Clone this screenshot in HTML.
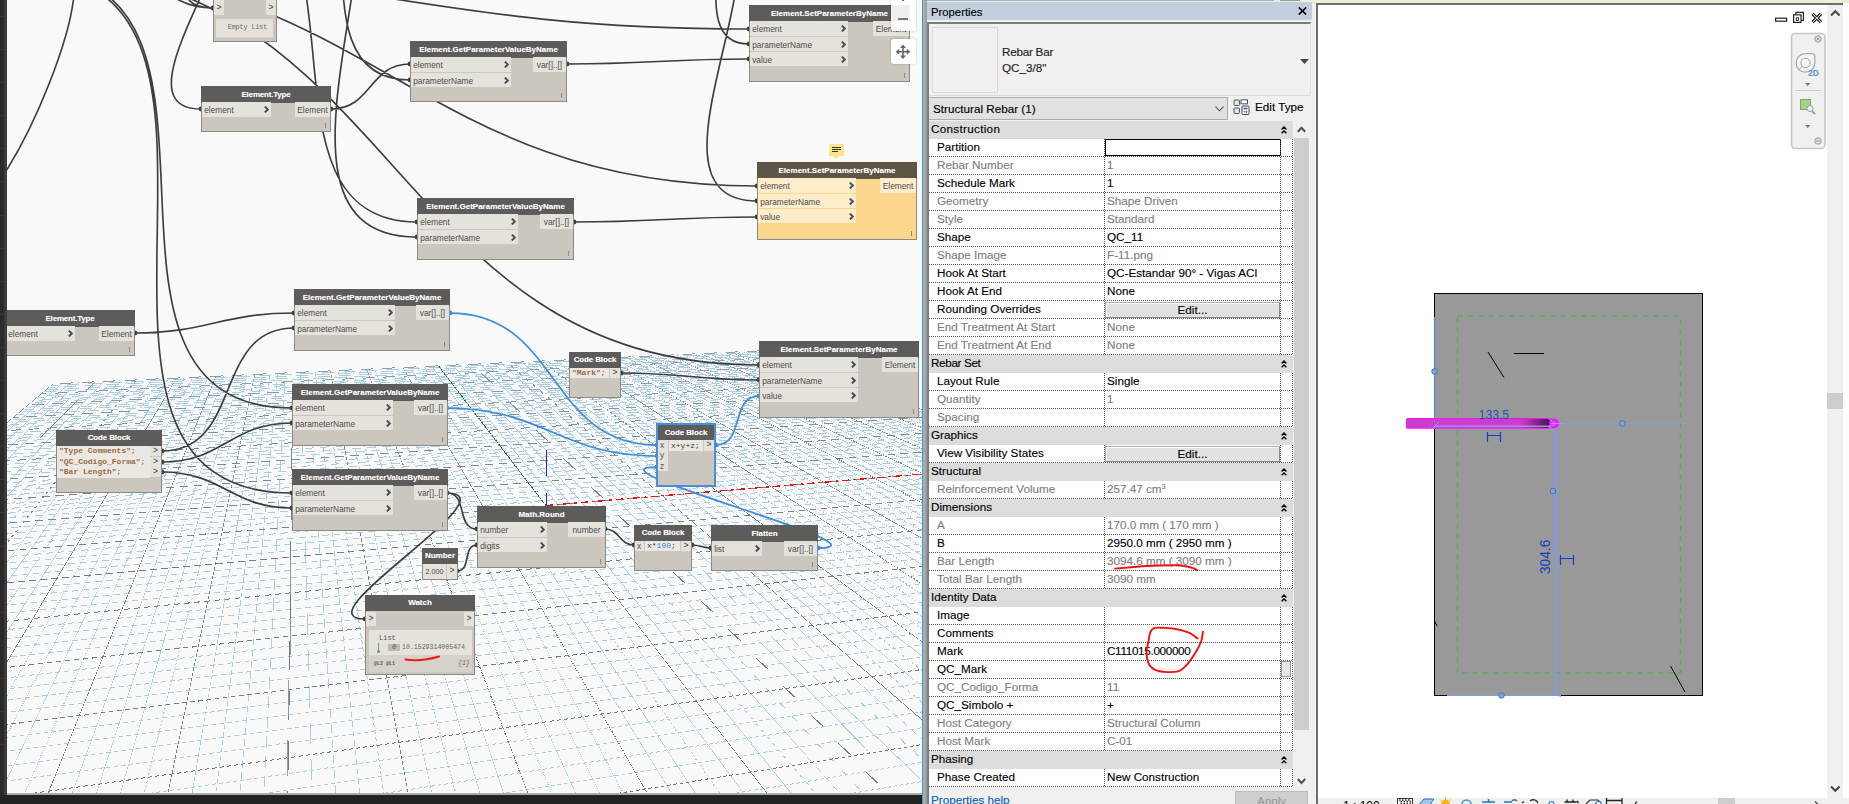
<!DOCTYPE html><html><head><meta charset="utf-8"><title>Dynamo - Revit</title><style>
*{box-sizing:border-box}
html,body{margin:0;padding:0}
body{width:1849px;height:804px;overflow:hidden;position:relative;background:#fff;font-family:"Liberation Sans",sans-serif}
#dyn{position:absolute;left:0;top:0;width:922px;height:804px;background:#222;overflow:hidden}
#strip{position:absolute;left:0;top:0;width:7px;height:795px;background:linear-gradient(90deg,transparent 0 4px,#3b3b3b 4px 7px),repeating-linear-gradient(180deg,#2a2a2a 0 16px,#363636 16px 17px,#2a2a2a 17px 33.1px)}
#cv{position:absolute;left:7px;top:0;width:915px;height:793px;background:#f9f9f9;overflow:hidden}
#cvline{position:absolute;left:7px;top:793px;width:915px;height:2px;background:#ababab}
#cv svg.ov{position:absolute;left:-7px;top:0}
.n{position:absolute;background:#cbc6be;border:1px solid #8d8a85;color:#4c4c4c;font-size:8.3px;line-height:14px;white-space:nowrap}
.n .h{position:absolute;left:-1px;top:-1px;right:-1px;height:16.5px;background:#5e5c5a;color:#fff;font-weight:bold;font-size:8px;line-height:17px;text-align:center;letter-spacing:0;text-shadow:0 0 1px rgba(255,255,255,.35)}
.n .p{position:absolute;height:14.4px;line-height:16.6px;background:#e5e2dc;padding-left:2.2px;overflow:hidden}
.n .o{position:absolute;height:14.4px;line-height:16.6px;background:#e5e2dc;text-align:center;overflow:hidden}
.n .ch{position:absolute;right:2px;top:4px;width:5px;height:7px}
.n .lg{position:absolute;right:4px;bottom:3px;width:1px;height:5px;background:#8d8a85}
.n.sel{border:2px solid #4a90d0}
.n.warn{background:#fbd68c;border-color:#8d8a85}
.n.warn .p,.n.warn .o{background:#feeccb}
.n.warn .h{background:#5d5546}
.mono{font-family:"Liberation Mono",monospace}
.dot{position:absolute;width:4px;height:4px;border-radius:2px;background:#444}
</style></head><body>
<div id="dyn"><div id="strip"></div><div id="cvline"></div><div id="cv">
<svg class="ov" width="922" height="793" viewBox="0 0 922 793" shape-rendering="crispEdges" fill="none"><defs><linearGradient id="gM" gradientUnits="userSpaceOnUse" x1="0" y1="355" x2="0" y2="793"><stop offset="0" stop-color="#93a3ae"/><stop offset=".2" stop-color="#7d8c97"/><stop offset=".5" stop-color="#6f7e88"/><stop offset="1" stop-color="#6b7a84"/></linearGradient></defs><g stroke-width="1"><path d="M61.9 383.4L0.0 437.5" stroke="#a9cde2" stroke-dasharray="0.88 0.64" stroke-dashoffset="0.23"/><path d="M70.3 383.0L0.0 446.6" stroke="#a9cde2" stroke-dasharray="0.86 0.63" stroke-dashoffset="0.97"/><path d="M78.7 382.6L0.0 456.4" stroke="#a9cde2" stroke-dasharray="0.85 0.61" stroke-dashoffset="0.11"/><path d="M87.0 382.2L0.0 466.9" stroke="#a9cde2" stroke-dasharray="0.83 0.60" stroke-dashoffset="0.77"/><path d="M103.6 381.4L0.0 490.6" stroke="#a9cde2" stroke-dasharray="0.84 0.61" stroke-dashoffset="0.08"/><path d="M111.8 381.1L0.0 503.9" stroke="#a9cde2" stroke-dasharray="0.86 0.62" stroke-dashoffset="0.75"/><path d="M120.0 380.7L0.0 518.5" stroke="#a9cde2" stroke-dasharray="0.88 0.64" stroke-dashoffset="0.06"/><path d="M128.2 380.3L0.0 534.4" stroke="#a9cde2" stroke-dasharray="0.91 0.66" stroke-dashoffset="0.68"/><path d="M144.4 379.5L0.0 571.1" stroke="#a9cde2" stroke-dasharray="0.96 0.70" stroke-dashoffset="0.15"/><path d="M152.5 379.2L0.0 592.5" stroke="#a9cde2" stroke-dasharray="1.00 0.72" stroke-dashoffset="0.73"/><path d="M160.5 378.8L0.0 616.4" stroke="#a9cde2" stroke-dasharray="1.04 0.75" stroke-dashoffset="1.48"/><path d="M168.6 378.4L0.0 643.2" stroke="#a9cde2" stroke-dasharray="1.08 0.78" stroke-dashoffset="0.23"/><path d="M184.5 377.7L0.0 708.1" stroke="#a9cde2" stroke-dasharray="1.19 0.86" stroke-dashoffset="1.29"/><path d="M192.4 377.3L0.0 747.8" stroke="#a9cde2" stroke-dasharray="1.26 0.91" stroke-dashoffset="2.06"/><path d="M200.3 376.9L-0.0 794.0" stroke="#a9cde2" stroke-dasharray="1.34 0.97" stroke-dashoffset="1.33"/><path d="M208.2 376.6L21.4 800.0" stroke="#a9cde2" stroke-dasharray="1.44 1.04" stroke-dashoffset="0.98"/><path d="M223.8 375.8L69.8 800.0" stroke="#a9cde2" stroke-dasharray="1.70 1.23" stroke-dashoffset="0.14"/><path d="M231.6 375.5L94.1 800.0" stroke="#a9cde2" stroke-dasharray="1.88 1.36" stroke-dashoffset="2.78"/><path d="M239.4 375.1L118.3 800.0" stroke="#a9cde2" stroke-dasharray="2.12 1.53" stroke-dashoffset="1.06"/><path d="M247.1 374.8L142.5 800.0" stroke="#a9cde2" stroke-dasharray="2.43 1.76" stroke-dashoffset="0.60"/><path d="M262.5 374.0L191.0 800.0" stroke="#a9cde2" stroke-dasharray="3.50 2.54" stroke-dashoffset="1.86"/><path d="M270.1 373.7L215.2 800.0" stroke="#a9cde2" stroke-dasharray="4.54 3.29" stroke-dashoffset="6.39"/><path d="M277.7 373.3L239.4 800.0" stroke="#a9cde2" stroke-dasharray="6.49 4.70" stroke-dashoffset="2.02"/><path d="M285.3 373.0L263.7 800.0" stroke="#a9cde2" stroke-dasharray="11.46 8.30" stroke-dashoffset="11.50"/><path d="M300.4 372.3L312.1 800.0" stroke="#a9cde2" stroke-dasharray="21.13 15.30" stroke-dashoffset="13.57"/><path d="M307.9 371.9L336.4 800.0" stroke="#a9cde2" stroke-dasharray="8.74 6.33" stroke-dashoffset="8.25"/><path d="M315.4 371.6L360.6 800.0" stroke="#a9cde2" stroke-dasharray="5.52 4.00" stroke-dashoffset="0.60"/><path d="M322.8 371.2L384.8 800.0" stroke="#a9cde2" stroke-dasharray="4.05 2.93" stroke-dashoffset="0.42"/><path d="M337.6 370.5L433.3 800.0" stroke="#a9cde2" stroke-dasharray="2.67 1.93" stroke-dashoffset="3.13"/><path d="M345.0 370.2L457.5 800.0" stroke="#a9cde2" stroke-dasharray="2.29 1.66" stroke-dashoffset="1.69"/><path d="M352.3 369.9L481.8 800.0" stroke="#a9cde2" stroke-dasharray="2.01 1.46" stroke-dashoffset="1.09"/><path d="M359.7 369.5L506.0 800.0" stroke="#a9cde2" stroke-dasharray="1.80 1.31" stroke-dashoffset="1.82"/><path d="M374.2 368.8L554.5 800.0" stroke="#a9cde2" stroke-dasharray="1.50 1.09" stroke-dashoffset="0.78"/><path d="M381.4 368.5L578.7 800.0" stroke="#a9cde2" stroke-dasharray="1.40 1.01" stroke-dashoffset="1.91"/><path d="M388.7 368.2L602.9 800.0" stroke="#a9cde2" stroke-dasharray="1.30 0.94" stroke-dashoffset="1.57"/><path d="M395.8 367.8L627.1 800.0" stroke="#a9cde2" stroke-dasharray="1.23 0.89" stroke-dashoffset="0.52"/><path d="M410.1 367.2L675.6 800.0" stroke="#a9cde2" stroke-dasharray="1.11 0.80" stroke-dashoffset="1.00"/><path d="M417.3 366.8L699.8 800.0" stroke="#a9cde2" stroke-dasharray="1.06 0.77" stroke-dashoffset="1.60"/><path d="M424.3 366.5L724.1 800.0" stroke="#a9cde2" stroke-dasharray="1.02 0.74" stroke-dashoffset="1.28"/><path d="M431.4 366.2L748.3 800.0" stroke="#a9cde2" stroke-dasharray="0.98 0.71" stroke-dashoffset="0.49"/><path d="M445.4 365.5L796.8 800.0" stroke="#a9cde2" stroke-dasharray="0.92 0.67" stroke-dashoffset="0.19"/><path d="M452.4 365.2L821.0 800.0" stroke="#a9cde2" stroke-dasharray="0.90 0.65" stroke-dashoffset="0.65"/><path d="M459.4 364.9L845.2 800.0" stroke="#a9cde2" stroke-dasharray="0.87 0.63" stroke-dashoffset="1.14"/><path d="M466.3 364.6L869.5 800.0" stroke="#a9cde2" stroke-dasharray="0.85 0.62" stroke-dashoffset="0.22"/><path d="M480.1 363.9L917.9 800.0" stroke="#a9cde2" stroke-dasharray="0.82 0.60" stroke-dashoffset="0.06"/><path d="M487.0 363.6L930.0 788.3" stroke="#a9cde2" stroke-dasharray="0.84 0.61" stroke-dashoffset="0.97"/><path d="M493.8 363.3L930.0 766.4" stroke="#a9cde2" stroke-dasharray="0.85 0.62" stroke-dashoffset="1.13"/><path d="M500.7 363.0L930.0 745.9" stroke="#a9cde2" stroke-dasharray="0.87 0.63" stroke-dashoffset="0.86"/><path d="M514.2 362.3L930.0 709.0" stroke="#a9cde2" stroke-dasharray="0.91 0.66" stroke-dashoffset="0.49"/><path d="M521.0 362.0L930.0 692.3" stroke="#a9cde2" stroke-dasharray="0.92 0.67" stroke-dashoffset="1.11"/><path d="M527.7 361.7L930.0 676.7" stroke="#a9cde2" stroke-dasharray="0.94 0.68" stroke-dashoffset="0.96"/><path d="M534.4 361.4L930.0 661.9" stroke="#a9cde2" stroke-dasharray="0.96 0.69" stroke-dashoffset="0.96"/><path d="M547.7 360.8L930.0 634.9" stroke="#a9cde2" stroke-dasharray="1.00 0.72" stroke-dashoffset="1.44"/><path d="M554.4 360.5L930.0 622.5" stroke="#a9cde2" stroke-dasharray="1.01 0.73" stroke-dashoffset="1.65"/><path d="M561.0 360.1L930.0 610.7" stroke="#a9cde2" stroke-dasharray="1.03 0.75" stroke-dashoffset="0.84"/><path d="M567.6 359.8L930.0 599.6" stroke="#a9cde2" stroke-dasharray="1.05 0.76" stroke-dashoffset="1.20"/><path d="M580.7 359.2L930.0 579.0" stroke="#a9cde2" stroke-dasharray="1.09 0.79" stroke-dashoffset="1.32"/><path d="M587.2 358.9L930.0 569.4" stroke="#a9cde2" stroke-dasharray="1.11 0.80" stroke-dashoffset="1.24"/><path d="M593.7 358.6L930.0 560.3" stroke="#a9cde2" stroke-dasharray="1.13 0.82" stroke-dashoffset="1.93"/><path d="M600.2 358.3L930.0 551.5" stroke="#a9cde2" stroke-dasharray="1.15 0.83" stroke-dashoffset="1.63"/><path d="M613.1 357.7L930.0 535.3" stroke="#a9cde2" stroke-dasharray="1.19 0.86" stroke-dashoffset="0.79"/><path d="M619.5 357.4L930.0 527.7" stroke="#a9cde2" stroke-dasharray="1.21 0.87" stroke-dashoffset="1.39"/><path d="M625.9 357.1L930.0 520.4" stroke="#a9cde2" stroke-dasharray="1.23 0.89" stroke-dashoffset="0.05"/><path d="M632.2 356.8L930.0 513.4" stroke="#a9cde2" stroke-dasharray="1.25 0.90" stroke-dashoffset="0.99"/><path d="M644.9 356.2L930.0 500.2" stroke="#a9cde2" stroke-dasharray="1.29 0.93" stroke-dashoffset="0.26"/><path d="M651.2 355.9L930.0 494.0" stroke="#a9cde2" stroke-dasharray="1.31 0.95" stroke-dashoffset="0.13"/><path d="M657.5 355.7L930.0 488.0" stroke="#a9cde2" stroke-dasharray="1.33 0.96" stroke-dashoffset="1.76"/><path d="M663.8 355.4L930.0 482.3" stroke="#a9cde2" stroke-dasharray="1.35 0.98" stroke-dashoffset="0.30"/><path d="M676.2 354.8L930.0 471.4" stroke="#a9cde2" stroke-dasharray="1.39 1.01" stroke-dashoffset="0.94"/><path d="M682.4 354.5L930.0 466.3" stroke="#a9cde2" stroke-dasharray="1.41 1.02" stroke-dashoffset="2.12"/><path d="M688.6 354.2L930.0 461.3" stroke="#a9cde2" stroke-dasharray="1.43 1.04" stroke-dashoffset="0.20"/><path d="M694.8 353.9L930.0 456.5" stroke="#a9cde2" stroke-dasharray="1.45 1.05" stroke-dashoffset="1.12"/><path d="M707.0 353.3L930.0 447.4" stroke="#a9cde2" stroke-dasharray="1.49 1.08" stroke-dashoffset="2.27"/><path d="M713.1 353.1L930.0 443.0" stroke="#a9cde2" stroke-dasharray="1.51 1.10" stroke-dashoffset="2.14"/><path d="M719.2 352.8L930.0 438.8" stroke="#a9cde2" stroke-dasharray="1.53 1.11" stroke-dashoffset="2.29"/><path d="M725.3 352.5L930.0 434.8" stroke="#a9cde2" stroke-dasharray="1.56 1.13" stroke-dashoffset="0.75"/><path d="M737.4 351.9L930.0 427.0" stroke="#a9cde2" stroke-dasharray="1.60 1.16" stroke-dashoffset="0.99"/><path d="M743.4 351.7L930.0 423.3" stroke="#a9cde2" stroke-dasharray="1.62 1.17" stroke-dashoffset="2.47"/><path d="M749.3 351.4L930.0 419.7" stroke="#a9cde2" stroke-dasharray="1.64 1.19" stroke-dashoffset="2.71"/><path d="M755.3 351.1L930.0 416.2" stroke="#a9cde2" stroke-dasharray="1.66 1.20" stroke-dashoffset="0.43"/><path d="M813.4 800.0L930.0 780.1" stroke="#a9cde2" stroke-dasharray="3.44 2.49" stroke-dashoffset="1.38"/><path d="M695.1 800.0L930.0 761.1" stroke="#a9cde2" stroke-dasharray="3.55 2.57" stroke-dashoffset="1.43"/><path d="M458.4 800.0L930.0 726.5" stroke="#a9cde2" stroke-dasharray="3.77 2.73" stroke-dashoffset="3.83"/><path d="M340.1 800.0L930.0 710.7" stroke="#a9cde2" stroke-dasharray="3.88 2.81" stroke-dashoffset="1.76"/><path d="M221.8 800.0L930.0 695.8" stroke="#a9cde2" stroke-dasharray="3.99 2.89" stroke-dashoffset="0.03"/><path d="M103.4 800.0L930.0 681.8" stroke="#a9cde2" stroke-dasharray="4.10 2.97" stroke-dashoffset="2.96"/><path d="M0.0 781.9L930.0 655.8" stroke="#a9cde2" stroke-dasharray="4.31 3.12" stroke-dashoffset="4.21"/><path d="M-0.0 766.7L930.0 643.8" stroke="#a9cde2" stroke-dasharray="4.42 3.20" stroke-dashoffset="7.27"/><path d="M0.0 752.3L930.0 632.3" stroke="#a9cde2" stroke-dasharray="4.53 3.28" stroke-dashoffset="5.40"/><path d="M0.0 738.5L930.0 621.5" stroke="#a9cde2" stroke-dasharray="4.64 3.36" stroke-dashoffset="4.13"/><path d="M0.0 712.9L930.0 601.2" stroke="#a9cde2" stroke-dasharray="4.86 3.52" stroke-dashoffset="5.67"/><path d="M0.0 701.0L930.0 591.8" stroke="#a9cde2" stroke-dasharray="4.97 3.60" stroke-dashoffset="0.46"/><path d="M0.0 689.6L930.0 582.7" stroke="#a9cde2" stroke-dasharray="5.08 3.68" stroke-dashoffset="7.88"/><path d="M0.0 678.6L930.0 574.1" stroke="#a9cde2" stroke-dasharray="5.19 3.76" stroke-dashoffset="6.98"/><path d="M0.0 658.1L930.0 557.9" stroke="#a9cde2" stroke-dasharray="5.41 3.92" stroke-dashoffset="7.45"/><path d="M0.0 648.5L930.0 550.3" stroke="#a9cde2" stroke-dasharray="5.52 4.00" stroke-dashoffset="3.74"/><path d="M0.0 639.2L930.0 543.0" stroke="#a9cde2" stroke-dasharray="5.63 4.08" stroke-dashoffset="3.87"/><path d="M0.0 630.3L930.0 535.9" stroke="#a9cde2" stroke-dasharray="5.74 4.16" stroke-dashoffset="1.03"/><path d="M0.0 613.5L930.0 522.6" stroke="#a9cde2" stroke-dasharray="5.96 4.32" stroke-dashoffset="0.64"/><path d="M0.0 605.6L930.0 516.4" stroke="#a9cde2" stroke-dasharray="6.07 4.40" stroke-dashoffset="0.71"/><path d="M0.0 597.9L930.0 510.3" stroke="#a9cde2" stroke-dasharray="6.18 4.48" stroke-dashoffset="2.23"/><path d="M0.0 590.5L930.0 504.5" stroke="#a9cde2" stroke-dasharray="6.29 4.56" stroke-dashoffset="1.76"/><path d="M0.0 576.5L930.0 493.4" stroke="#a9cde2" stroke-dasharray="6.51 4.72" stroke-dashoffset="0.59"/><path d="M0.0 569.9L930.0 488.1" stroke="#a9cde2" stroke-dasharray="6.62 4.80" stroke-dashoffset="0.00"/><path d="M0.0 563.4L930.0 483.0" stroke="#a9cde2" stroke-dasharray="6.73 4.88" stroke-dashoffset="1.76"/><path d="M0.0 557.2L930.0 478.1" stroke="#a9cde2" stroke-dasharray="6.84 4.96" stroke-dashoffset="1.20"/><path d="M0.0 545.3L930.0 468.7" stroke="#a9cde2" stroke-dasharray="7.06 5.12" stroke-dashoffset="0.31"/><path d="M0.0 539.7L930.0 464.3" stroke="#a9cde2" stroke-dasharray="7.17 5.20" stroke-dashoffset="10.82"/><path d="M0.0 534.2L930.0 459.9" stroke="#a9cde2" stroke-dasharray="7.29 5.28" stroke-dashoffset="7.71"/><path d="M0.0 528.9L930.0 455.7" stroke="#a9cde2" stroke-dasharray="7.40 5.36" stroke-dashoffset="1.89"/><path d="M0.0 518.7L930.0 447.7" stroke="#a9cde2" stroke-dasharray="7.62 5.52" stroke-dashoffset="4.56"/><path d="M0.0 513.8L930.0 443.8" stroke="#a9cde2" stroke-dasharray="7.73 5.59" stroke-dashoffset="4.85"/><path d="M0.0 509.1L930.0 440.1" stroke="#a9cde2" stroke-dasharray="7.84 5.67" stroke-dashoffset="1.66"/><path d="M0.0 504.5L930.0 436.5" stroke="#a9cde2" stroke-dasharray="7.95 5.75" stroke-dashoffset="11.63"/><path d="M0.0 495.7L930.0 429.5" stroke="#a9cde2" stroke-dasharray="8.17 5.91" stroke-dashoffset="6.56"/><path d="M0.0 491.5L930.0 426.1" stroke="#a9cde2" stroke-dasharray="8.28 5.99" stroke-dashoffset="6.91"/><path d="M0.0 487.3L930.0 422.9" stroke="#a9cde2" stroke-dasharray="8.39 6.07" stroke-dashoffset="1.24"/><path d="M0.0 483.3L930.0 419.7" stroke="#a9cde2" stroke-dasharray="8.50 6.15" stroke-dashoffset="1.50"/><path d="M0.0 475.6L930.0 413.6" stroke="#a9cde2" stroke-dasharray="8.72 6.31" stroke-dashoffset="3.98"/><path d="M0.0 471.9L925.0 411.0" stroke="#a9cde2" stroke-dasharray="8.83 6.39" stroke-dashoffset="12.62"/><path d="M0.0 468.3L918.4 408.5" stroke="#a9cde2" stroke-dasharray="8.94 6.47" stroke-dashoffset="2.49"/><path d="M0.0 464.7L911.9 406.2" stroke="#a9cde2" stroke-dasharray="9.05 6.55" stroke-dashoffset="0.36"/><path d="M0.0 457.9L899.3 401.5" stroke="#a9cde2" stroke-dasharray="9.27 6.71" stroke-dashoffset="8.44"/><path d="M0.0 454.6L893.2 399.3" stroke="#a9cde2" stroke-dasharray="9.38 6.79" stroke-dashoffset="2.37"/><path d="M0.0 451.4L887.2 397.1" stroke="#a9cde2" stroke-dasharray="9.49 6.87" stroke-dashoffset="8.89"/><path d="M0.0 448.3L881.3 394.9" stroke="#a9cde2" stroke-dasharray="9.60 6.95" stroke-dashoffset="0.45"/><path d="M0.0 442.2L869.9 390.8" stroke="#a9cde2" stroke-dasharray="9.82 7.11" stroke-dashoffset="16.57"/><path d="M0.0 439.3L864.4 388.7" stroke="#a9cde2" stroke-dasharray="9.93 7.19" stroke-dashoffset="14.79"/><path d="M0.0 436.4L859.0 386.7" stroke="#a9cde2" stroke-dasharray="10.04 7.27" stroke-dashoffset="12.06"/><path d="M0.0 433.6L853.7 384.8" stroke="#a9cde2" stroke-dasharray="10.15 7.35" stroke-dashoffset="4.57"/><path d="M1.0 428.1L843.3 381.0" stroke="#a9cde2" stroke-dasharray="10.38 7.51" stroke-dashoffset="2.99"/><path d="M4.3 425.3L838.3 379.1" stroke="#a9cde2" stroke-dasharray="10.49 7.59" stroke-dashoffset="13.96"/><path d="M7.6 422.6L833.3 377.3" stroke="#a9cde2" stroke-dasharray="10.60 7.67" stroke-dashoffset="9.73"/><path d="M10.8 419.9L828.5 375.5" stroke="#a9cde2" stroke-dasharray="10.71 7.75" stroke-dashoffset="14.38"/><path d="M16.9 414.7L819.0 372.1" stroke="#a9cde2" stroke-dasharray="10.93 7.91" stroke-dashoffset="4.20"/><path d="M19.9 412.2L814.4 370.4" stroke="#a9cde2" stroke-dasharray="11.04 7.99" stroke-dashoffset="15.44"/><path d="M22.8 409.7L809.9 368.7" stroke="#a9cde2" stroke-dasharray="11.15 8.07" stroke-dashoffset="18.93"/><path d="M25.7 407.3L805.5 367.1" stroke="#a9cde2" stroke-dasharray="11.26 8.15" stroke-dashoffset="16.55"/><path d="M31.2 402.6L796.8 363.9" stroke="#a9cde2" stroke-dasharray="11.48 8.31" stroke-dashoffset="16.20"/><path d="M33.9 400.4L792.6 362.3" stroke="#a9cde2" stroke-dasharray="11.59 8.39" stroke-dashoffset="14.79"/><path d="M36.5 398.1L788.5 360.8" stroke="#a9cde2" stroke-dasharray="11.70 8.47" stroke-dashoffset="4.57"/><path d="M39.1 396.0L784.4 359.3" stroke="#a9cde2" stroke-dasharray="11.81 8.55" stroke-dashoffset="10.54"/><path d="M44.1 391.7L776.4 356.4" stroke="#a9cde2" stroke-dasharray="12.03 8.71" stroke-dashoffset="0.60"/><path d="M46.5 389.7L772.5 355.0" stroke="#a9cde2" stroke-dasharray="12.14 8.79" stroke-dashoffset="0.58"/><path d="M48.9 387.7L768.7 353.6" stroke="#a9cde2" stroke-dasharray="12.25 8.87" stroke-dashoffset="5.90"/><path d="M51.2 385.7L765.0 352.2" stroke="#a9cde2" stroke-dasharray="12.36 8.95" stroke-dashoffset="5.53"/><path d="M53.5 383.8L0.0 429.0" stroke="url(#gM)" stroke-dasharray="0.90 0.65" stroke-dashoffset="0.50"/><path d="M95.3 381.8L0.0 478.3" stroke="url(#gM)" stroke-dasharray="0.83 0.60" stroke-dashoffset="0.52"/><path d="M136.3 379.9L0.0 551.8" stroke="url(#gM)" stroke-dasharray="0.93 0.68" stroke-dashoffset="0.11"/><path d="M176.5 378.0L0.0 673.5" stroke="url(#gM)" stroke-dasharray="1.13 0.82" stroke-dashoffset="0.44"/><path d="M216.0 376.2L45.6 800.0" stroke="url(#gM)" stroke-dasharray="1.55 1.13" stroke-dashoffset="2.62"/><path d="M254.8 374.4L166.7 800.0" stroke="url(#gM)" stroke-dasharray="2.86 2.07" stroke-dashoffset="0.58"/><path d="M292.9 372.6L287.9 800.0" stroke="url(#gM)" stroke-dasharray="29.01 21.00" stroke-dashoffset="31.95"/><path d="M330.2 370.9L409.1 800.0" stroke="url(#gM)" stroke-dasharray="3.21 2.32" stroke-dashoffset="1.14"/><path d="M366.9 369.2L530.2 800.0" stroke="url(#gM)" stroke-dasharray="1.64 1.19" stroke-dashoffset="1.28"/><path d="M403.0 367.5L651.4 800.0" stroke="url(#gM)" stroke-dasharray="1.16 0.84" stroke-dashoffset="1.15"/><path d="M438.4 365.8L772.5 800.0" stroke="url(#gM)" stroke-dasharray="0.95 0.69" stroke-dashoffset="1.61"/><path d="M473.2 364.2L893.7 800.0" stroke="url(#gM)" stroke-dasharray="0.84 0.60" stroke-dashoffset="0.70"/><path d="M507.4 362.6L930.0 726.9" stroke="url(#gM)" stroke-dasharray="0.89 0.64" stroke-dashoffset="1.34"/><path d="M541.1 361.1L930.0 648.0" stroke="url(#gM)" stroke-dasharray="0.98 0.71" stroke-dashoffset="0.77"/><path d="M574.1 359.5L930.0 589.0" stroke="url(#gM)" stroke-dasharray="1.07 0.77" stroke-dashoffset="0.11"/><path d="M606.6 358.0L930.0 543.2" stroke="url(#gM)" stroke-dasharray="1.17 0.85" stroke-dashoffset="0.57"/><path d="M638.6 356.5L930.0 506.6" stroke="url(#gM)" stroke-dasharray="1.27 0.92" stroke-dashoffset="0.37"/><path d="M670.0 355.1L930.0 476.8" stroke="url(#gM)" stroke-dasharray="1.37 0.99" stroke-dashoffset="0.58"/><path d="M700.9 353.6L930.0 451.9" stroke="url(#gM)" stroke-dasharray="1.47 1.07" stroke-dashoffset="1.39"/><path d="M731.3 352.2L930.0 430.8" stroke="url(#gM)" stroke-dasharray="1.58 1.14" stroke-dashoffset="1.13"/><path d="M761.3 350.8L930.0 412.8" stroke="url(#gM)" stroke-dasharray="1.68 1.22" stroke-dashoffset="0.51"/><path d="M576.7 800.0L930.0 743.3" stroke="url(#gM)" stroke-dasharray="3.66 2.65" stroke-dashoffset="3.06"/><path d="M0.0 797.9L930.0 668.4" stroke="url(#gM)" stroke-dasharray="4.20 3.04" stroke-dashoffset="2.68"/><path d="M0.0 725.4L930.0 611.1" stroke="url(#gM)" stroke-dasharray="4.75 3.44" stroke-dashoffset="5.06"/><path d="M0.0 668.2L930.0 565.8" stroke="url(#gM)" stroke-dasharray="5.30 3.84" stroke-dashoffset="8.00"/><path d="M0.0 621.8L930.0 529.1" stroke="url(#gM)" stroke-dasharray="5.85 4.24" stroke-dashoffset="6.40"/><path d="M0.0 583.4L930.0 498.8" stroke="url(#gM)" stroke-dasharray="6.40 4.64" stroke-dashoffset="3.75"/><path d="M0.0 551.2L930.0 473.4" stroke="url(#gM)" stroke-dasharray="6.95 5.04" stroke-dashoffset="4.36"/><path d="M0.0 523.7L930.0 451.6" stroke="url(#gM)" stroke-dasharray="7.51 5.44" stroke-dashoffset="3.26"/><path d="M0.0 500.0L930.0 432.9" stroke="url(#gM)" stroke-dasharray="8.06 5.83" stroke-dashoffset="13.80"/><path d="M0.0 479.4L930.0 416.6" stroke="url(#gM)" stroke-dasharray="8.61 6.23" stroke-dashoffset="5.09"/><path d="M0.0 461.3L905.5 403.8" stroke="url(#gM)" stroke-dasharray="9.16 6.63" stroke-dashoffset="15.02"/><path d="M0.0 445.2L875.6 392.8" stroke="url(#gM)" stroke-dasharray="9.71 7.03" stroke-dashoffset="8.84"/><path d="M0.0 430.9L848.4 382.9" stroke="url(#gM)" stroke-dasharray="10.27 7.43" stroke-dashoffset="6.49"/><path d="M13.9 417.3L823.7 373.8" stroke="url(#gM)" stroke-dasharray="10.82 7.83" stroke-dashoffset="6.15"/><path d="M28.5 404.9L801.1 365.5" stroke="url(#gM)" stroke-dasharray="11.37 8.23" stroke-dashoffset="15.80"/><path d="M41.6 393.8L780.4 357.8" stroke="url(#gM)" stroke-dasharray="11.92 8.63" stroke-dashoffset="7.31"/><path d="M53.5 383.8L761.3 350.8" stroke="url(#gM)" stroke-dasharray="12.47 9.03" stroke-dashoffset="14.89"/></g><path d="M545.9 505.5L438.4 365.8" stroke="#1a7a1a" stroke-width="1" stroke-dasharray="1.600 1.200"/><path d="M545.9 505.5L1064.2 462.1" stroke="#f01010" stroke-width="1.35" stroke-dasharray="7 4 2.5 4"/><path d="M546.500 450V476M546.500 493V505" stroke="#2020e8" stroke-width="1"/><path d="M290.5 560V594M290.5 619V655M288.5 680V716M287.5 740V776" stroke="#8d9ba6" stroke-width="1"/></svg>
<svg class="ov" width="922" height="793" viewBox="0 0 922 793" fill="none" stroke-linecap="round"><path d="M331.0 109.0C371.9 109.0 369.1 64.0 410.0 64.0M135.0 333.0C207.1 333.0 221.9 313.0 294.0 313.0M162.0 451.0C243.2 451.0 212.8 328.0 294.0 328.0M162.0 462.0C223.1 462.0 230.9 423.0 292.0 423.0M162.0 472.0C222.7 472.0 231.3 508.0 292.0 508.0M621.0 373.0C683.2 373.0 696.8 380.0 759.0 380.0M447.0 493.0C468.1 493.0 455.9 529.0 477.0 529.0M447.0 493.0C514.6 493.0 297.4 619.0 365.0 619.0M457.0 571.0C471.8 571.0 462.2 545.0 477.0 545.0M605.0 529.0C619.9 529.0 619.1 545.0 634.0 545.0M692.0 545.0C700.7 545.0 702.3 548.0 711.0 548.0M567.0 64.0C648.9 64.0 667.1 59.0 749.0 59.0M574.0 222.0C656.4 222.0 674.6 217.0 757.0 217.0M27.0 -33.0C353.1 -33.0 422.9 29.0 749.0 29.0M27.0 -33.0C370.0 -33.0 414.0 186.0 757.0 186.0M27.0 -33.0C401.9 -33.0 384.1 365.0 759.0 365.0M31.2 -27.0C273.6 -27.0 49.6 408.0 292.0 408.0M22.5 -27.6C301.0 -27.6 13.5 493.0 292.0 493.0M273.0 -180.0C405.2 -180.0 277.8 80.0 410.0 80.0M209.0 -111.0C385.7 -111.0 240.3 222.0 417.0 222.0M280.0 -203.0C487.4 -203.0 209.6 237.0 417.0 237.0M684.0 -102.0C755.9 -102.0 677.1 44.0 749.0 44.0M689.0 -100.0C827.9 -100.0 618.1 201.0 757.0 201.0M203.0 -121.0C306.5 -121.0 97.5 109.0 201.0 109.0M252.0 -236.0C363.2 -236.0 101.8 8.0 213.0 8.0M100.0 -40.0C155.2 -40.0 157.8 8.0 213.0 8.0" stroke="#3d3d3d" stroke-width="1.65"/><path d="M73.4 0C68 43.600 36.700 122 7 169.500" stroke="#3d3d3d" stroke-width="1.65"/><path d="M450.0 313.0C560.5 313.0 546.5 445.0 657.0 445.0M447.0 408.0C543.9 408.0 560.1 456.0 657.0 456.0M818.0 548.0C899.1 548.0 575.9 467.0 657.0 467.0M716.0 445.0C745.3 445.0 729.7 396.0 759.0 396.0" stroke="#3d8edb" stroke-width="1.75"/><circle cx="365" cy="619" r="2.4" fill="#3d3d3d"/><circle cx="477" cy="545" r="2.4" fill="#3d3d3d"/><circle cx="213" cy="8" r="2.4" fill="#3d3d3d"/><circle cx="292" cy="408" r="2.4" fill="#3d3d3d"/><circle cx="447" cy="493" r="2.4" fill="#3d3d3d"/><circle cx="162" cy="472" r="2.4" fill="#3d3d3d"/><circle cx="292" cy="493" r="2.4" fill="#3d3d3d"/><circle cx="292" cy="423" r="2.4" fill="#3d3d3d"/><circle cx="162" cy="462" r="2.4" fill="#3d3d3d"/><circle cx="294" cy="328" r="2.4" fill="#3d3d3d"/><circle cx="477" cy="529" r="2.4" fill="#3d3d3d"/><circle cx="757" cy="217" r="2.4" fill="#3d3d3d"/><circle cx="621" cy="373" r="2.4" fill="#3d3d3d"/><circle cx="759" cy="365" r="2.4" fill="#3d3d3d"/><circle cx="162" cy="451" r="2.4" fill="#3d3d3d"/><circle cx="749" cy="29" r="2.4" fill="#3d3d3d"/><circle cx="417" cy="237" r="2.4" fill="#3d3d3d"/><circle cx="574" cy="222" r="2.4" fill="#3d3d3d"/><circle cx="759" cy="396" r="2.4" fill="#3d8edb"/><circle cx="605" cy="529" r="2.4" fill="#3d3d3d"/><circle cx="749" cy="59" r="2.4" fill="#3d3d3d"/><circle cx="818" cy="548" r="2.4" fill="#3d8edb"/><circle cx="201" cy="109" r="2.4" fill="#3d3d3d"/><circle cx="634" cy="545" r="2.4" fill="#3d3d3d"/><circle cx="749" cy="44" r="2.4" fill="#3d3d3d"/><circle cx="757" cy="201" r="2.4" fill="#3d3d3d"/><circle cx="331" cy="109" r="2.4" fill="#3d3d3d"/><circle cx="450" cy="313" r="2.4" fill="#3d8edb"/><circle cx="417" cy="222" r="2.4" fill="#3d3d3d"/><circle cx="759" cy="380" r="2.4" fill="#3d3d3d"/><circle cx="757" cy="186" r="2.4" fill="#3d3d3d"/><circle cx="657" cy="445" r="2.4" fill="#3d8edb"/><circle cx="292" cy="508" r="2.4" fill="#3d3d3d"/><circle cx="135" cy="333" r="2.4" fill="#3d3d3d"/><circle cx="447" cy="408" r="2.4" fill="#3d8edb"/><circle cx="657" cy="467" r="2.4" fill="#3d8edb"/><circle cx="567" cy="64" r="2.4" fill="#3d3d3d"/><circle cx="716" cy="445" r="2.4" fill="#3d8edb"/><circle cx="457" cy="571" r="2.4" fill="#3d3d3d"/><circle cx="410" cy="80" r="2.4" fill="#3d3d3d"/><circle cx="294" cy="313" r="2.4" fill="#3d3d3d"/><circle cx="711" cy="548" r="2.4" fill="#3d3d3d"/><circle cx="692" cy="545" r="2.4" fill="#3d3d3d"/><circle cx="410" cy="64" r="2.4" fill="#3d3d3d"/><circle cx="657" cy="456" r="2.4" fill="#3d8edb"/></svg>
<div class="n " style="left:403px;top:41px;width:157px;height:61px"><div class="h" style="letter-spacing:0px">Element.GetParameterValueByName</div><div class="p" style="left:0;top:15.4px;width:100px">element<svg class="ch" viewBox="0 0 5 7"><path d="M.8 .6L3.9 3.5L.8 6.4" fill="none" stroke="#474b55" stroke-width="1.9"/></svg></div><div class="p" style="left:0;top:30.6px;width:100px">parameterName<svg class="ch" viewBox="0 0 5 7"><path d="M.8 .6L3.9 3.5L.8 6.4" fill="none" stroke="#474b55" stroke-width="1.9"/></svg></div><div class="o" style="right:0;top:15.4px;width:33px">var[]..[]</div><div class="lg"></div></div>
<div class="n " style="left:410px;top:198px;width:157px;height:62px"><div class="h" style="letter-spacing:0px">Element.GetParameterValueByName</div><div class="p" style="left:0;top:15.4px;width:100px">element<svg class="ch" viewBox="0 0 5 7"><path d="M.8 .6L3.9 3.5L.8 6.4" fill="none" stroke="#474b55" stroke-width="1.9"/></svg></div><div class="p" style="left:0;top:30.6px;width:100px">parameterName<svg class="ch" viewBox="0 0 5 7"><path d="M.8 .6L3.9 3.5L.8 6.4" fill="none" stroke="#474b55" stroke-width="1.9"/></svg></div><div class="o" style="right:0;top:15.4px;width:33px">var[]..[]</div><div class="lg"></div></div>
<div class="n " style="left:287px;top:289px;width:156px;height:62px"><div class="h" style="letter-spacing:0px">Element.GetParameterValueByName</div><div class="p" style="left:0;top:15.4px;width:100px">element<svg class="ch" viewBox="0 0 5 7"><path d="M.8 .6L3.9 3.5L.8 6.4" fill="none" stroke="#474b55" stroke-width="1.9"/></svg></div><div class="p" style="left:0;top:30.6px;width:100px">parameterName<svg class="ch" viewBox="0 0 5 7"><path d="M.8 .6L3.9 3.5L.8 6.4" fill="none" stroke="#474b55" stroke-width="1.9"/></svg></div><div class="o" style="right:0;top:15.4px;width:33px">var[]..[]</div><div class="lg"></div></div>
<div class="n " style="left:285px;top:384px;width:156px;height:62px"><div class="h" style="letter-spacing:0px">Element.GetParameterValueByName</div><div class="p" style="left:0;top:15.4px;width:100px">element<svg class="ch" viewBox="0 0 5 7"><path d="M.8 .6L3.9 3.5L.8 6.4" fill="none" stroke="#474b55" stroke-width="1.9"/></svg></div><div class="p" style="left:0;top:30.6px;width:100px">parameterName<svg class="ch" viewBox="0 0 5 7"><path d="M.8 .6L3.9 3.5L.8 6.4" fill="none" stroke="#474b55" stroke-width="1.9"/></svg></div><div class="o" style="right:0;top:15.4px;width:33px">var[]..[]</div><div class="lg"></div></div>
<div class="n " style="left:285px;top:469px;width:156px;height:62px"><div class="h" style="letter-spacing:0px">Element.GetParameterValueByName</div><div class="p" style="left:0;top:15.4px;width:100px">element<svg class="ch" viewBox="0 0 5 7"><path d="M.8 .6L3.9 3.5L.8 6.4" fill="none" stroke="#474b55" stroke-width="1.9"/></svg></div><div class="p" style="left:0;top:30.6px;width:100px">parameterName<svg class="ch" viewBox="0 0 5 7"><path d="M.8 .6L3.9 3.5L.8 6.4" fill="none" stroke="#474b55" stroke-width="1.9"/></svg></div><div class="o" style="right:0;top:15.4px;width:33px">var[]..[]</div><div class="lg"></div></div>
<div class="n " style="left:194px;top:86px;width:130px;height:46px"><div class="h" style="letter-spacing:-0.2px">Element.Type</div><div class="p" style="left:0;top:15.4px;width:69px">element<svg class="ch" viewBox="0 0 5 7"><path d="M.8 .6L3.9 3.5L.8 6.4" fill="none" stroke="#474b55" stroke-width="1.9"/></svg></div><div class="o" style="right:0;top:15.4px;width:35px">Element</div><div class="lg"></div></div>
<div class="n " style="left:-2px;top:310px;width:130px;height:46px"><div class="h" style="letter-spacing:-0.2px">Element.Type</div><div class="p" style="left:0;top:15.4px;width:69px">element<svg class="ch" viewBox="0 0 5 7"><path d="M.8 .6L3.9 3.5L.8 6.4" fill="none" stroke="#474b55" stroke-width="1.9"/></svg></div><div class="o" style="right:0;top:15.4px;width:35px">Element</div><div class="lg"></div></div>
<div class="n " style="left:742px;top:5px;width:161px;height:77px"><div class="h" style="letter-spacing:0px">Element.SetParameterByName</div><div class="p" style="left:0;top:15.4px;width:98px">element<svg class="ch" viewBox="0 0 5 7"><path d="M.8 .6L3.9 3.5L.8 6.4" fill="none" stroke="#474b55" stroke-width="1.9"/></svg></div><div class="p" style="left:0;top:30.6px;width:98px">parameterName<svg class="ch" viewBox="0 0 5 7"><path d="M.8 .6L3.9 3.5L.8 6.4" fill="none" stroke="#474b55" stroke-width="1.9"/></svg></div><div class="p" style="left:0;top:45.8px;width:98px">value<svg class="ch" viewBox="0 0 5 7"><path d="M.8 .6L3.9 3.5L.8 6.4" fill="none" stroke="#474b55" stroke-width="1.9"/></svg></div><div class="o" style="right:0;top:15.4px;width:36px">Element</div><div class="lg"></div></div>
<div class="n warn" style="left:750px;top:162px;width:160px;height:78px"><div class="h" style="letter-spacing:0px">Element.SetParameterByName</div><div class="p" style="left:0;top:15.4px;width:98px">element<svg class="ch" viewBox="0 0 5 7"><path d="M.8 .6L3.9 3.5L.8 6.4" fill="none" stroke="#474b55" stroke-width="1.9"/></svg></div><div class="p" style="left:0;top:30.6px;width:98px">parameterName<svg class="ch" viewBox="0 0 5 7"><path d="M.8 .6L3.9 3.5L.8 6.4" fill="none" stroke="#474b55" stroke-width="1.9"/></svg></div><div class="p" style="left:0;top:45.8px;width:98px">value<svg class="ch" viewBox="0 0 5 7"><path d="M.8 .6L3.9 3.5L.8 6.4" fill="none" stroke="#474b55" stroke-width="1.9"/></svg></div><div class="o" style="right:0;top:15.4px;width:36px">Element</div><div class="lg"></div></div>
<div class="n " style="left:752px;top:341px;width:160px;height:77px"><div class="h" style="letter-spacing:0px">Element.SetParameterByName</div><div class="p" style="left:0;top:15.4px;width:98px">element<svg class="ch" viewBox="0 0 5 7"><path d="M.8 .6L3.9 3.5L.8 6.4" fill="none" stroke="#474b55" stroke-width="1.9"/></svg></div><div class="p" style="left:0;top:30.6px;width:98px">parameterName<svg class="ch" viewBox="0 0 5 7"><path d="M.8 .6L3.9 3.5L.8 6.4" fill="none" stroke="#474b55" stroke-width="1.9"/></svg></div><div class="p" style="left:0;top:45.8px;width:98px">value<svg class="ch" viewBox="0 0 5 7"><path d="M.8 .6L3.9 3.5L.8 6.4" fill="none" stroke="#474b55" stroke-width="1.9"/></svg></div><div class="o" style="right:0;top:15.4px;width:36px">Element</div><div class="lg"></div></div>
<div class="n " style="left:470px;top:506px;width:129px;height:62px"><div class="h" style="letter-spacing:0px">Math.Round</div><div class="p" style="left:0;top:15.4px;width:69px">number<svg class="ch" viewBox="0 0 5 7"><path d="M.8 .6L3.9 3.5L.8 6.4" fill="none" stroke="#474b55" stroke-width="1.9"/></svg></div><div class="p" style="left:0;top:30.6px;width:69px">digits<svg class="ch" viewBox="0 0 5 7"><path d="M.8 .6L3.9 3.5L.8 6.4" fill="none" stroke="#474b55" stroke-width="1.9"/></svg></div><div class="o" style="right:0;top:15.4px;width:37px">number</div><div class="lg"></div></div>
<div class="n " style="left:704px;top:525px;width:107px;height:46px"><div class="h" style="letter-spacing:0px">Flatten</div><div class="p" style="left:0;top:15.4px;width:50px">list<svg class="ch" viewBox="0 0 5 7"><path d="M.8 .6L3.9 3.5L.8 6.4" fill="none" stroke="#474b55" stroke-width="1.9"/></svg></div><div class="o" style="right:0;top:15.4px;width:33px">var[]..[]</div><div class="lg"></div></div>
<div class="" style="position:absolute;left:206px;top:-20px;width:64px;height:62px;background:#cbc6be;border:1px solid #8d8a85;"></div>
<div class="" style="position:absolute;left:207px;top:-2px;width:10px;height:17px;background:#e5e2dc;color:#333;font:8.5px/21px 'Liberation Mono',monospace;text-align:center">&gt;</div><div class="" style="position:absolute;left:259px;top:-2px;width:10px;height:17px;background:#e5e2dc;color:#333;font:8.5px/21px 'Liberation Mono',monospace;text-align:center">&gt;</div>
<div class="" style="position:absolute;left:209px;top:19px;width:57px;height:19px;background:#e5e2dc;color:#666;font:6.6px/17px 'Liberation Mono',monospace;text-align:center;padding-left:6px;border-bottom:1px solid #d6d2cb">Empty List</div>
<div class="" style="position:absolute;left:49px;top:430px;width:106px;height:63px;background:#cbc6be;border:1px solid #8d8a85;"></div><div class="" style="position:absolute;left:49px;top:430px;width:106px;height:16px;background:#5e5c5a;color:#fff;font-weight:bold;font-size:8px;line-height:16px;text-align:center;white-space:nowrap;letter-spacing:-0.15px;text-shadow:0 0 1px rgba(255,255,255,.35)">Code Block</div>
<div class="" style="position:absolute;left:50px;top:446px;width:93px;height:32px;background:#ebe8e3;color:#9a6b43;font:bold 8px/10.6px 'Liberation Mono',monospace;white-space:pre;padding-left:2px;overflow:hidden;">"Type Comments";
"QC_Codigo_Forma";
"Bar Length";</div>
<div class="" style="position:absolute;left:143px;top:446px;width:11px;height:10px;background:#e5e2dc;color:#333;font:8.5px/10px 'Liberation Mono',monospace;text-align:center">&gt;</div><div class="" style="position:absolute;left:143px;top:457px;width:11px;height:10px;background:#e5e2dc;color:#333;font:8.5px/10px 'Liberation Mono',monospace;text-align:center">&gt;</div><div class="" style="position:absolute;left:143px;top:467px;width:11px;height:10px;background:#e5e2dc;color:#333;font:8.5px/10px 'Liberation Mono',monospace;text-align:center">&gt;</div>
<div class="" style="position:absolute;left:562px;top:352px;width:52px;height:46px;background:#cbc6be;border:1px solid #8d8a85;"></div><div class="" style="position:absolute;left:562px;top:352px;width:52px;height:16px;background:#5e5c5a;color:#fff;font-weight:bold;font-size:8px;line-height:16px;text-align:center;white-space:nowrap;letter-spacing:-0.15px;text-shadow:0 0 1px rgba(255,255,255,.35)">Code Block</div>
<div class="" style="position:absolute;left:563px;top:368px;width:39px;height:10px;background:#ebe8e3;color:#9a6b43;font:bold 8px/10px 'Liberation Mono',monospace;white-space:pre;padding-left:2px;overflow:hidden;">"Mark";</div><div class="" style="position:absolute;left:603px;top:368px;width:10px;height:10px;background:#e5e2dc;color:#333;font:8.5px/10px 'Liberation Mono',monospace;text-align:center">&gt;</div>
<div class="" style="position:absolute;left:649px;top:423px;width:60px;height:64px;background:#cbc6be;border:2px solid #4a8fd3;"></div><div class="" style="position:absolute;left:651px;top:425px;width:56px;height:15px;background:#5e5c5a;color:#fff;font-weight:bold;font-size:8px;line-height:15px;text-align:center;white-space:nowrap;letter-spacing:-0.15px;text-shadow:0 0 1px rgba(255,255,255,.35)">Code Block</div>
<div class="" style="position:absolute;left:651px;top:440px;width:10px;height:31px;background:#e5e2dc;color:#555;font:8.3px/10.4px 'Liberation Sans',sans-serif;padding-left:2px;white-space:pre">x
y
z</div>
<div class="" style="position:absolute;left:662px;top:440px;width:34px;height:11px;background:#ebe8e3;color:#3a3a3a;font:8px/11px 'Liberation Mono',monospace;white-space:pre;padding-left:2px;overflow:hidden;">x+y+z;</div><div class="" style="position:absolute;left:697px;top:440px;width:10px;height:11px;background:#e5e2dc;color:#333;font:8.5px/11px 'Liberation Mono',monospace;text-align:center">&gt;</div>
<div class="" style="position:absolute;left:627px;top:525px;width:58px;height:46px;background:#cbc6be;border:1px solid #8d8a85;"></div><div class="" style="position:absolute;left:627px;top:525px;width:58px;height:16px;background:#5e5c5a;color:#fff;font-weight:bold;font-size:8px;line-height:16px;text-align:center;white-space:nowrap;letter-spacing:-0.15px;text-shadow:0 0 1px rgba(255,255,255,.35)">Code Block</div>
<div class="" style="position:absolute;left:628px;top:541px;width:9px;height:10px;background:#e5e2dc;color:#555;font:8.3px/10px 'Liberation Sans',sans-serif;padding-left:2px">x</div>
<div class="" style="position:absolute;left:638px;top:541px;width:35px;height:10px;background:#ebe8e3;color:#3a3a3a;font:8px/10px 'Liberation Mono',monospace;white-space:pre;padding-left:2px;overflow:hidden;">x*<span style="color:#3b7fd4">100</span>;</div><div class="" style="position:absolute;left:674px;top:541px;width:10px;height:10px;background:#e5e2dc;color:#333;font:8.5px/10px 'Liberation Mono',monospace;text-align:center">&gt;</div>
<div class="" style="position:absolute;left:415px;top:548px;width:36px;height:32px;background:#cbc6be;border:1px solid #8d8a85;"></div><div class="" style="position:absolute;left:415px;top:548px;width:36px;height:16px;background:#5e5c5a;color:#fff;font-weight:bold;font-size:8px;line-height:16px;text-align:center;white-space:nowrap;letter-spacing:0px;text-shadow:0 0 1px rgba(255,255,255,.35)">Number</div>
<div class="" style="position:absolute;left:416px;top:564px;width:23px;height:15px;background:#e5e2dc;color:#444;font:7.2px/16px 'Liberation Sans',sans-serif;text-align:center">2.000</div><div class="" style="position:absolute;left:440px;top:564px;width:10px;height:15px;background:#e5e2dc;color:#333;font:8.5px/15px 'Liberation Mono',monospace;text-align:center">&gt;</div>
<div class="" style="position:absolute;left:358px;top:595px;width:110px;height:80px;background:#cbc6be;border:1px solid #8d8a85;"></div><div class="" style="position:absolute;left:358px;top:595px;width:110px;height:16px;background:#5e5c5a;color:#fff;font-weight:bold;font-size:8px;line-height:16px;text-align:center;white-space:nowrap;letter-spacing:0px;text-shadow:0 0 1px rgba(255,255,255,.35)">Watch</div>
<div class="" style="position:absolute;left:359px;top:612px;width:10px;height:14px;background:#e5e2dc;color:#333;font:8.5px/14px 'Liberation Mono',monospace;text-align:center">&gt;</div><div class="" style="position:absolute;left:457px;top:612px;width:10px;height:14px;background:#e5e2dc;color:#333;font:8.5px/14px 'Liberation Mono',monospace;text-align:center">&gt;</div>
<div class="" style="position:absolute;left:362px;top:630px;width:103px;height:42px;background:#d6d2cb"></div>
<div class="" style="position:absolute;left:362px;top:630px;width:103px;height:25px;background:#e5e2dc"></div>
<div class="" style="position:absolute;left:372px;top:633.5px;width:30px;height:9px;color:#555;font:7px/9px 'Liberation Mono',monospace">List</div>
<div class="" style="position:absolute;left:371px;top:643px;width:1px;height:8px;background:#888"></div><div class="" style="position:absolute;left:370px;top:650px;width:3px;height:3px;background:#888;border-radius:2px"></div>
<div class="" style="position:absolute;left:381px;top:644px;width:12px;height:7px;background:#bdb9b3;color:#555;font:italic 6.5px/7px 'Liberation Mono',monospace;text-align:center">0</div>
<div class="" style="position:absolute;left:395px;top:643px;width:66px;height:9px;color:#666;font:6.6px/9px 'Liberation Mono',monospace;letter-spacing:-.02px">10.1529314005474</div>
<div class="" style="position:absolute;left:367px;top:661px;width:30px;height:7px;color:#555;font:bold 5px/7px 'Liberation Mono',monospace">@L2 @L1</div>
<div class="" style="position:absolute;left:451px;top:659px;width:12px;height:9px;color:#666;font:italic 6.5px/9px 'Liberation Mono',monospace">{1}</div>
<svg class="ov" width="922" height="793" viewBox="0 0 922 793" fill="none"><path d="M405.5 659.5C416 661 429 659.500 439 656.500" stroke="#f01818" stroke-width="2.1" stroke-linecap="round"/></svg>
<div class="" style="position:absolute;left:822px;top:144px;width:15px;height:12px;background:#fbe58c"></div>
<svg class="ov" width="922" height="793" viewBox="0 0 922 793"><path d="M833 156h6l-3 3z" fill="#fbe58c"/><path d="M832 147.5h9M832 149.5h9M832 151.5h6" stroke="#333" stroke-width="1"/></svg>
<div class="" style="position:absolute;left:884px;top:-6px;width:25px;height:37px;background:rgba(255,255,255,.93);border-radius:3px;box-shadow:0 0 3px rgba(0,0,0,.18)"></div>
<div class="" style="position:absolute;left:885px;top:5px;width:17px;height:16px;background:#eeeeee"></div><div class="" style="position:absolute;left:891px;top:18px;width:10px;height:2px;background:#777"></div><div class="" style="position:absolute;left:895px;top:0px;width:2px;height:1px;background:#666"></div>
<div class="" style="position:absolute;left:884px;top:39px;width:25px;height:24.5px;background:#fff;border-radius:3px;box-shadow:0 0 3px rgba(0,0,0,.18)"></div>
<svg class="ov" width="922" height="793" viewBox="0 0 922 793"><path d="M903 44l3 3.5h-2.2v3h3v-2.2l3.5 3-3.5 3v-2.2h-3v3h2.2l-3 3.5-3-3.5h2.2v-3h-3v2.2l-3.5-3 3.5-3v2.2h3v-3h-2.2z" fill="#666" transform="translate(0,.5)"/></svg>
</div></div>
<style>
#pp{position:absolute;left:922px;top:0;width:395px;height:804px;background:#f0f0f0;font-size:11.7px;color:#000;overflow:hidden;-webkit-text-stroke:.13px}
#pp div{position:absolute;white-space:nowrap}
#pp .r{left:7px;width:364px;height:18px}
#pp .cat{background:#dcdcdc;line-height:16px;padding-left:2px}
#pp .row{background:#fff;line-height:15px}
#pp .row .l{left:8px;top:0}
#pp .row .v{left:178px;top:0}
#pp .g{color:#7e7e7e}
#pp .dl{left:7px;width:364px;height:1px;background-image:repeating-linear-gradient(90deg,#555 0 1px,transparent 1px 2px)}
#pp .dv{width:1px;background-image:repeating-linear-gradient(180deg,#555 0 1px,transparent 1px 2px)}
#pp .btn{left:176px;top:1px;width:175px;height:16px;background:#e1e1e1;border:1px solid #adadad;border-bottom-color:#8a8a8a;border-right-color:#8a8a8a;text-align:center;line-height:13px;box-shadow:inset 1px 1px 0 #fff}
</style>
<div id="pp">
<div style="left:0;top:0;width:1px;height:804px;background:#2d9be8"></div><div style="left:1px;top:0;width:4px;height:804px;background:linear-gradient(90deg,#b4b3b1 0%,#a6a5a3 60%,#969593 100%);z-index:3"></div><div style="left:5px;top:22px;width:2px;height:782px;background:linear-gradient(90deg,#858483,#777675);z-index:3"></div>
<div style="left:5px;top:0;width:390px;height:2px;background:#e9f0d9"></div><div style="left:5px;top:0;width:347px;height:1px;background:#9db3cf"></div><div style="left:358px;top:0;width:20px;height:1px;background:#9a9a9a"></div>
<div style="left:5px;top:2px;width:385px;height:18px;background:#c2cedd"></div>
<div style="left:9px;top:5px;font-size:11.3px;line-height:15px">Properties</div>
<svg style="position:absolute;left:376px;top:7px" width="9" height="8" viewBox="0 0 9 8"><path d="M.8.5L8.2 7.5M8.2.5L.8 7.5" stroke="#000" stroke-width="1.7" fill="none"/></svg>
<div style="left:5px;top:22px;width:384px;height:74px;border-top:2px solid #7b7b7b;border-left:2px solid #7b7b7b;border-right:1px solid #e3e3e3;border-bottom:1px solid #dadada;background:#f0f0f0"></div>
<div style="left:10px;top:27px;width:66px;height:66px;border:1px solid #d9d9d9;background:#f0f0f0"></div>
<div style="left:80px;top:44px;font-size:11.7px;line-height:16px;color:#222"><span style="letter-spacing:-.25px">Rebar Bar</span><br>QC_3/8"</div>
<svg style="position:absolute;left:378px;top:59px" width="9" height="5" viewBox="0 0 9 5"><path d="M0 0h9L4.5 5z" fill="#444"/></svg>
<div style="left:7px;top:97px;width:299px;height:23px;background:#e1e1e1;border:1px solid #adadad;border-left:none"></div>
<div style="left:11px;top:101px;line-height:15px">Structural Rebar (1)</div>
<svg style="position:absolute;left:293px;top:106px" width="9" height="6" viewBox="0 0 9 6"><path d="M.5.7L4.5 4.8L8.5.7" stroke="#555" stroke-width="1.1" fill="none"/></svg>
<svg style="position:absolute;left:311px;top:99px" width="17" height="16" viewBox="0 0 17 16" fill="none"><rect x="1" y="1" width="5.5" height="5.5" rx="1" fill="#dfe3ea" stroke="#555"/><rect x="1" y="9" width="5.5" height="5.5" rx="1" fill="#dfe3ea" stroke="#555"/><rect x="8" y=".8" width="6.5" height="4" fill="#fff" stroke="#555"/><rect x="9" y="7" width="7" height="8.5" rx="1" fill="#fff" stroke="#445"/><path d="M10.5 9.5h4" stroke="#1f5fc0" stroke-width="1.6"/><path d="M10.5 12.8h3.6M13 11.6l1.3 1.2L13 14" stroke="#555" stroke-width=".8"/></svg>
<div style="left:333px;top:99px;line-height:15px">Edit Type</div>
<div style="left:7px;top:121px;width:364px;height:666px;background:#fff"></div>
<div class="r cat" style="top:121px"><span style="letter-spacing:.3px">Construction</span><svg style="position:absolute;left:352px;top:5px" width="6" height="8" viewBox="0 0 6 8"><path d="M.6 3.500L3 1.100L5.400 3.500M.6 7.300L3 4.900L5.400 7.300" stroke="#000" stroke-width="1.400" fill="none"/></svg></div>
<div class="r row" style="top:139px"><div class="l">Partition</div><div style="left:176px;top:0;width:176px;height:17px;border:1.5px solid #000;background:#fff"></div></div>
<div class="dl" style="top:156px"></div>
<div class="r row" style="top:157px"><div class="l g">Rebar Number</div><div class="v g">1</div></div>
<div class="dl" style="top:174px"></div>
<div class="r row" style="top:175px"><div class="l">Schedule Mark</div><div class="v">1</div></div>
<div class="dl" style="top:192px"></div>
<div class="r row" style="top:193px"><div class="l g">Geometry</div><div class="v g">Shape Driven</div></div>
<div class="dl" style="top:210px"></div>
<div class="r row" style="top:211px"><div class="l g">Style</div><div class="v g">Standard</div></div>
<div class="dl" style="top:228px"></div>
<div class="r row" style="top:229px"><div class="l">Shape</div><div class="v">QC_11</div></div>
<div class="dl" style="top:246px"></div>
<div class="r row" style="top:247px"><div class="l g">Shape Image</div><div class="v g">F-11.png</div></div>
<div class="dl" style="top:264px"></div>
<div class="r row" style="top:265px"><div class="l">Hook At Start</div><div class="v">QC-Estandar 90° - Vigas ACI</div></div>
<div class="dl" style="top:282px"></div>
<div class="r row" style="top:283px"><div class="l">Hook At End</div><div class="v">None</div></div>
<div class="dl" style="top:300px"></div>
<div class="r row" style="top:301px"><div class="l">Rounding Overrides</div><div class="btn">Edit...</div></div>
<div class="dl" style="top:318px"></div>
<div class="r row" style="top:319px"><div class="l g">End Treatment At Start</div><div class="v g">None</div></div>
<div class="dl" style="top:336px"></div>
<div class="r row" style="top:337px"><div class="l g">End Treatment At End</div><div class="v g">None</div></div>
<div class="dl" style="top:354px"></div>
<div class="r cat" style="top:355px"><span style="letter-spacing:-.35px">Rebar Set</span><svg style="position:absolute;left:352px;top:5px" width="6" height="8" viewBox="0 0 6 8"><path d="M.6 3.500L3 1.100L5.400 3.500M.6 7.300L3 4.900L5.400 7.300" stroke="#000" stroke-width="1.400" fill="none"/></svg></div>
<div class="r row" style="top:373px"><div class="l">Layout Rule</div><div class="v">Single</div></div>
<div class="dl" style="top:390px"></div>
<div class="r row" style="top:391px"><div class="l g">Quantity</div><div class="v g">1</div></div>
<div class="dl" style="top:408px"></div>
<div class="r row" style="top:409px"><div class="l g">Spacing</div><div class="v g"></div></div>
<div class="dl" style="top:426px"></div>
<div class="r cat" style="top:427px">Graphics<svg style="position:absolute;left:352px;top:5px" width="6" height="8" viewBox="0 0 6 8"><path d="M.6 3.500L3 1.100L5.400 3.500M.6 7.300L3 4.900L5.400 7.300" stroke="#000" stroke-width="1.400" fill="none"/></svg></div>
<div class="r row" style="top:445px"><div class="l">View Visibility States</div><div class="btn">Edit...</div></div>
<div class="dl" style="top:462px"></div>
<div class="r cat" style="top:463px">Structural<svg style="position:absolute;left:352px;top:5px" width="6" height="8" viewBox="0 0 6 8"><path d="M.6 3.500L3 1.100L5.400 3.500M.6 7.300L3 4.900L5.400 7.300" stroke="#000" stroke-width="1.400" fill="none"/></svg></div>
<div class="r row" style="top:481px"><div class="l g">Reinforcement Volume</div><div class="v g">257.47 cm<span style="font-size:7.5px;position:relative;top:-4px">3</span></div></div>
<div class="dl" style="top:498px"></div>
<div class="r cat" style="top:499px">Dimensions<svg style="position:absolute;left:352px;top:5px" width="6" height="8" viewBox="0 0 6 8"><path d="M.6 3.500L3 1.100L5.400 3.500M.6 7.300L3 4.900L5.400 7.300" stroke="#000" stroke-width="1.400" fill="none"/></svg></div>
<div class="r row" style="top:517px"><div class="l g">A</div><div class="v g">170.0 mm ( 170 mm )</div></div>
<div class="dl" style="top:534px"></div>
<div class="r row" style="top:535px"><div class="l">B</div><div class="v">2950.0 mm ( 2950 mm )</div></div>
<div class="dl" style="top:552px"></div>
<div class="r row" style="top:553px"><div class="l g">Bar Length</div><div class="v g">3094.6 mm ( 3090 mm )</div></div>
<div class="dl" style="top:570px"></div>
<div class="r row" style="top:571px"><div class="l g">Total Bar Length</div><div class="v g">3090 mm</div></div>
<div class="dl" style="top:588px"></div>
<div class="r cat" style="top:589px">Identity Data<svg style="position:absolute;left:352px;top:5px" width="6" height="8" viewBox="0 0 6 8"><path d="M.6 3.500L3 1.100L5.400 3.500M.6 7.300L3 4.900L5.400 7.300" stroke="#000" stroke-width="1.400" fill="none"/></svg></div>
<div class="r row" style="top:607px"><div class="l">Image</div><div class="v"></div></div>
<div class="dl" style="top:624px"></div>
<div class="r row" style="top:625px"><div class="l">Comments</div><div class="v"></div></div>
<div class="dl" style="top:642px"></div>
<div class="r row" style="top:643px"><div class="l">Mark</div><div class="v"><span style="letter-spacing:-.32px">C111015.000000</span></div></div>
<div class="dl" style="top:660px"></div>
<div class="r row" style="top:661px"><div class="l">QC_Mark</div><div class="v"></div></div>
<div class="dl" style="top:678px"></div>
<div class="r row" style="top:679px"><div class="l g">QC_Codigo_Forma</div><div class="v g">11</div></div>
<div class="dl" style="top:696px"></div>
<div class="r row" style="top:697px"><div class="l">QC_Simbolo +</div><div class="v">+</div></div>
<div class="dl" style="top:714px"></div>
<div class="r row" style="top:715px"><div class="l g">Host Category</div><div class="v g">Structural Column</div></div>
<div class="dl" style="top:732px"></div>
<div class="r row" style="top:733px"><div class="l g">Host Mark</div><div class="v g">C-01</div></div>
<div class="dl" style="top:750px"></div>
<div class="r cat" style="top:751px">Phasing<svg style="position:absolute;left:352px;top:5px" width="6" height="8" viewBox="0 0 6 8"><path d="M.6 3.500L3 1.100L5.400 3.500M.6 7.300L3 4.900L5.400 7.300" stroke="#000" stroke-width="1.400" fill="none"/></svg></div>
<div class="r row" style="top:769px"><div class="l">Phase Created</div><div class="v">New Construction</div></div>
<div class="dl" style="top:786px"></div>
<div class="dv" style="left:182px;top:139px;height:216px"></div>
<div class="dv" style="left:358px;top:139px;height:216px"></div>
<div class="dv" style="left:370px;top:139px;height:216px"></div>
<div class="dv" style="left:182px;top:373px;height:54px"></div>
<div class="dv" style="left:358px;top:373px;height:54px"></div>
<div class="dv" style="left:370px;top:373px;height:54px"></div>
<div class="dv" style="left:182px;top:445px;height:18px"></div>
<div class="dv" style="left:358px;top:445px;height:18px"></div>
<div class="dv" style="left:370px;top:445px;height:18px"></div>
<div class="dv" style="left:182px;top:481px;height:18px"></div>
<div class="dv" style="left:358px;top:481px;height:18px"></div>
<div class="dv" style="left:370px;top:481px;height:18px"></div>
<div class="dv" style="left:182px;top:517px;height:72px"></div>
<div class="dv" style="left:358px;top:517px;height:72px"></div>
<div class="dv" style="left:370px;top:517px;height:72px"></div>
<div class="dv" style="left:182px;top:607px;height:144px"></div>
<div class="dv" style="left:358px;top:607px;height:144px"></div>
<div class="dv" style="left:370px;top:607px;height:144px"></div>
<div class="dv" style="left:182px;top:769px;height:18px"></div>
<div class="dv" style="left:358px;top:769px;height:18px"></div>
<div class="dv" style="left:370px;top:769px;height:18px"></div>
<div style="left:372px;top:121px;width:15px;height:666px;background:#f0f0f0"></div>
<div style="left:372px;top:138px;width:15px;height:592px;background:#cdcdcd"></div>
<svg style="position:absolute;left:375px;top:126px" width="9" height="7" viewBox="0 0 9 7"><path d="M.8 5.800L4.500 1.800L8.200 5.800" stroke="#505050" stroke-width="2" fill="none"/></svg>
<svg style="position:absolute;left:375px;top:778px" width="9" height="7" viewBox="0 0 9 7"><path d="M.8 1L4.500 5L8.200 1" stroke="#505050" stroke-width="2" fill="none"/></svg>
<div style="left:359px;top:661px;width:10px;height:16px;background:#e6e6e6;border:1px solid #9a9a9a"></div>
<div style="left:9px;top:792px;color:#0563c1;line-height:15px">Properties help</div>
<div style="left:313px;top:791px;width:73px;height:20px;background:#cfcfcf;border:1px solid #bcbcbc;color:#9a9a9a;text-align:center;line-height:17px">Apply</div>
<svg style="position:absolute;left:0;top:0" width="395" height="804" viewBox="922 0 395 804" fill="none" stroke="#f01010" stroke-width="1.900" stroke-linecap="round" stroke-linejoin="round"><path d="M1115.200 568.600C1135 566.500 1155 565 1176 565.200C1185 565.500 1192 567 1197.300 570.100"/><path d="M1197.6 638.5C1196.2 637.6 1192.9 634.4 1189.5 632.9C1186.1 631.4 1181.2 630.0 1177.0 629.2C1172.8 628.4 1168.3 628.1 1164.6 627.9C1160.9 627.7 1157.1 627.2 1154.7 627.9C1152.3 628.6 1151.3 630.1 1150.3 632.3C1149.3 634.5 1149.1 637.7 1148.5 641.0C1147.9 644.3 1146.6 648.5 1146.6 652.2C1146.6 655.9 1147.2 660.5 1148.5 663.4C1149.8 666.3 1151.6 668.1 1154.7 669.6C1157.8 671.1 1162.9 671.9 1167.1 672.1C1171.2 672.3 1176.3 672.0 1179.6 670.8C1182.9 669.5 1184.3 667.7 1187.0 664.6C1189.7 661.5 1193.3 656.1 1195.7 652.2C1198.1 648.3 1200.1 644.4 1201.3 641.0C1202.5 637.6 1202.6 633.2 1202.9 631.6"/></svg>
</div>
<div id="rv" style="position:absolute;left:1312px;top:0;width:537px;height:804px;background:#f0f0f0;overflow:hidden">
<div style="position:absolute;left:0;top:0;width:537px;height:3px;background:#e9f0d9"></div>
<div style="position:absolute;left:4px;top:3px;width:511px;height:801px;background:#fff;border-left:2px solid #6e6e6e;border-top:2px solid #6e6e6e"></div>
<div style="position:absolute;left:515px;top:5px;width:16px;height:793px;background:#f0f0f0"></div><div style="position:absolute;left:515px;top:3px;width:17px;height:2px;background:#6e6e6e"></div>
<div style="position:absolute;left:531px;top:3px;width:6px;height:801px;background:#fdfdfd"></div>
<div style="position:absolute;left:515px;top:393px;width:16px;height:16px;background:#cdcdcd"></div>
<div style="position:absolute;left:6px;top:798px;width:531px;height:6px;background:#f0f0f0"></div>
<div style="position:absolute;left:406px;top:798px;width:17px;height:6px;background:#cdcdcd"></div>
<svg style="position:absolute;left:0;top:0" width="537" height="804" viewBox="1312 0 537 804" fill="none"><rect x="1434.5" y="293.5" width="268" height="402" fill="#999" stroke="#000" stroke-width="1"/><rect x="1457.5" y="316" width="223" height="357" stroke="#5aac5a" stroke-width="1.4" stroke-dasharray="5.200 5.100"/><path d="M1488 352L1504 377.5M1514 353.5H1544M1670.5 666L1685 692M1434.5 621L1437 626" stroke="#000" stroke-width="1"/><path d="M1434.500 317V429" stroke="#5f84d6" stroke-width="1.200"/><path d="M1434 423.500H1688M1447 695.500H1561M1553 692l8 5" stroke="#7d9cf0" stroke-width="1"/><path d="M1554.100 429V557" stroke="#8c98d6" stroke-width="1.800"/><path d="M1556.400 423V695" stroke="#7d9cf5" stroke-width="1.500"/><defs><linearGradient id="mg" x1="0" x2="1"><stop offset="0" stop-color="#cc3dcc"/><stop offset=".8" stop-color="#cc3dcc"/><stop offset=".99" stop-color="#4a154a"/></linearGradient></defs><rect x="1406" y="418" width="145" height="10.800" rx="1.500" fill="#ff10ff"/><rect x="1406.800" y="419" width="143.400" height="8.800" fill="url(#mg)"/><circle cx="1554" cy="423.500" r="5" fill="#ff10ff"/><path d="M1434 426.200H1551" stroke="#a08cf2" stroke-width="1.500"/><path d="M1431.500 429.500l7.500-7.500M1548.500 419l7 4.500-7 4.500M1551 423.500h12" stroke="#8aa2f5" stroke-width="1"/><circle cx="1434.5" cy="371.5" r="2.800" fill="#6fa8ee" stroke="#4a5f8a" stroke-width=".8"/><circle cx="1622.5" cy="423.5" r="2.800" fill="#6fa8ee" stroke="#4a5f8a" stroke-width=".8"/><circle cx="1553" cy="491" r="2.800" fill="#6fa8ee" stroke="#4a5f8a" stroke-width=".8"/><circle cx="1501.5" cy="695.5" r="2.800" fill="#6fa8ee" stroke="#4a5f8a" stroke-width=".8"/><text x="1478.700" y="418.500" textLength="30.400" lengthAdjust="spacingAndGlyphs" font-family="Liberation Sans, sans-serif" font-size="12.900" fill="#1d4fc4">133.5</text><text transform="translate(1550.200 574) rotate(-90)" textLength="34.300" lengthAdjust="spacingAndGlyphs" font-family="Liberation Sans, sans-serif" font-size="15" fill="#1040c8">304.6</text><path d="M1487.500 432v10M1500.500 432v10M1487.500 435.500h13M1560.500 555v10M1573.500 555v10M1560.500 558.500h13" stroke="#1040c8" stroke-width="1.200"/><rect x="1775.6" y="18.2" width="11" height="3" fill="#fff" stroke="#222" stroke-width="1.2"/><rect x="1793.600" y="14.800" width="7.400" height="7.600" fill="#fff" stroke="#222" stroke-width="1.200"/><path d="M1796 14.500v-2.200h7.400v8h-2" stroke="#222" stroke-width="1.200"/><rect x="1796.300" y="17.800" width="2.200" height="2.600" stroke="#222" stroke-width=".9"/><path d="M1812.500 13.800l8.500 8.400M1821 13.800l-8.500 8.400" stroke="#222" stroke-width="3.200"/><path d="M1812.500 13.800l8.500 8.400M1821 13.800l-8.500 8.400" stroke="#fff" stroke-width="1"/><path d="M1831 15.500l4.300-4.300 4.300 4.300" stroke="#444" stroke-width="2"/><path d="M1831 786.500l4.300 4.300 4.300-4.300" stroke="#444" stroke-width="2"/><rect x="1791.5" y="33.5" width="33.5" height="115" rx="4" fill="#f0f0f0" stroke="#c6c6c6" stroke-width="1.6"/><circle cx="1818" cy="39" r="3.2" stroke="#999" stroke-width="1" fill="#e4e4e4"/><path d="M1816.5 37.5l3 3m0-3l-3 3" stroke="#888" stroke-width=".8"/><circle cx="1818" cy="141" r="3.2" stroke="#999" stroke-width="1" fill="#e4e4e4"/><path d="M1816 141h4" stroke="#888" stroke-width=".9"/><path d="M1805.500 53.600h6.300a3 3 0 0 1 3 3v6.300a9.300 9.300 0 1 1-9.300-9.300z" fill="#f6f6f6" stroke="#ababab" stroke-width="1.300"/><circle cx="1805.500" cy="62.900" r="4.600" fill="#fbfbfb" stroke="#a6a6a6" stroke-width="1.100"/><path d="M1802.400 66.200l-3.600 3.600" stroke="#a6a6a6" stroke-width="1"/><text x="1808" y="76" font-family="Liberation Sans, sans-serif" font-size="8.5" font-weight="bold" fill="#5b8fd0">2D</text><path d="M1805 83h5.500l-2.750 3z M1805 125h5.500l-2.750 3z" fill="#777"/><path d="M1795.500 90.500h25" stroke="#c9c9c9"/><rect x="1800.500" y="99.500" width="10" height="10" fill="#a9d08e" stroke="#7da865"/><circle cx="1810" cy="108.500" r="3" fill="#eef3f8" stroke="#999"/><path d="M1812 111l3 3" stroke="#888" stroke-width="1.500"/><rect x="1397.500" y="798.500" width="15" height="8" fill="#fff" stroke="#333"/><path d="M1399 800h12" stroke="#333" stroke-width="1.500" stroke-dasharray="1.500 1.500"/><path d="M1399 801.500h12M1399 803.500h12" stroke="#333" stroke-width="1.500" stroke-dasharray="1.500 1.500" stroke-dashoffset="1.500"/><path d="M1419 804.500l5-5.500h10l-4 5.500z" fill="#9ec8e8" stroke="#2b6fb5"/><circle cx="1445.500" cy="804" r="4.500" fill="#f7b21b"/><path d="M1445.500 797.500v2M1440 799.500l1.200 1.200M1451 799.500l-1.200 1.200" stroke="#e8960c" stroke-width="1"/><circle cx="1466.500" cy="804.500" r="4.500" stroke="#3b8ad8" stroke-width="1.500" fill="#eaf3fb"/><path d="M1482 802h13M1488.500 799v3M1504 802h8M1512 801a3 3 0 0 1 5 0" stroke="#2b6fb5" stroke-width="1.500"/><path d="M1522 803l2-1.500M1530 801a5 5 0 0 1 8 2" stroke="#333" stroke-width="1.400"/><circle cx="1551.500" cy="804" r="2.500" stroke="#2b7bd8" stroke-width="1.200"/><path d="M1564.500 802h12M1567 799.500v3M1573 799.500v3M1577 801l1.500 2" stroke="#222" stroke-width="1.400"/><path d="M1586 804l4-4h8l3 3" stroke="#333" stroke-width="1.200"/><circle cx="1598.500" cy="804.500" r="3" stroke="#2b7bd8" stroke-width="1.200" fill="#fff"/><path d="M1606.500 798v6M1622 798v6M1606.500 800.500h15.500" stroke="#222" stroke-width="1.300"/><path d="M1637 801.500l-2 2.500M1815 801.500l2.500 2.500" stroke="#444" stroke-width="1.400"/><text x="1343" y="810" font-family="Liberation Sans, sans-serif" font-size="12" fill="#000">1 : 100</text></svg>
</div>
</body></html>
